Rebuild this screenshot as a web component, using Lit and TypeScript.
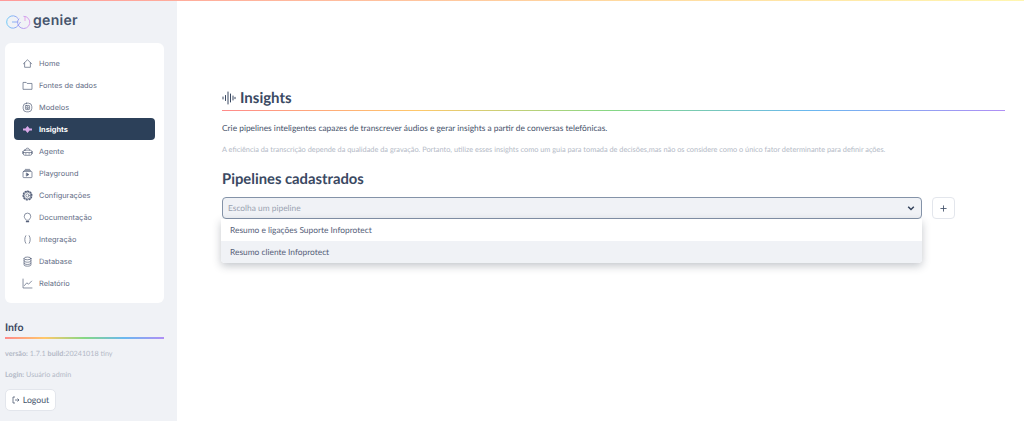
import { LitElement, html, css, svg } from "lit";
import { customElement } from "lit/decorators.js";

const I = (c: unknown) => html`<svg class="ic" viewBox="0 0 16 16" fill="none" stroke="currentColor" stroke-width="1" stroke-linecap="round" stroke-linejoin="round">${c}</svg>`;
const menu: [string, unknown][] = [
  ["Home", svg`<path d="M2 8.500 8 2.500l6 6M3.800 7v6.500h8.400V7"/>`],
  ["Fontes de dados", svg`<path d="M1.500 13V3.500h4.500l1.500 1.500h7V13z"/>`],
  ["Modelos", svg`<rect x="1.700" y="1.700" width="12.600" height="12.600" rx="5"/><rect x="5" y="5" width="6" height="6" rx="1"/><path d="M7 9V7h2v2z"/>`],
  ["Insights", svg`<path fill="#d8a8e8" stroke="none" d="M8 3 11 6.500h3.500v3H11L8 13 5 9.500H1.500v-3H5z"/>`],
  ["Agente", svg`<rect x="2" y="6" width="12" height="7.500" rx="2"/><path d="M5 6c0-4 6-4 6 0M2 9.500h12M5 11.500h1M10 11.500h1" /><path d="M1 8v3M15 8v3"/>`],
  ["Playground", svg`<rect x="1.500" y="5" width="13" height="9" rx="1"/><path d="M3.500 3.500h9M5 2h6"/><path fill="currentColor" d="M6.800 7.500 10 9.500l-3.200 2z"/>`],
  ["Configurações", svg`<circle cx="8" cy="8" r="2.400"/><circle cx="8" cy="8" r="5"/><path stroke-width="2" stroke-dasharray="1.600 2.300" d="M8 1.700a6.300 6.300 0 1 1-.01 0"/>`],
  ["Documentação", svg`<path d="M5.800 11.500C5 9.800 3.300 8.800 3.300 6.300a4.700 4.700 0 0 1 9.400 0c0 2.500-1.700 3.500-2.500 5.200z"/><path stroke-width="1.600" d="M6.300 14h3.400"/>`],
  ["Integração", svg`<path d="M5.500 2.500C3.500 5.500 3.500 10.500 5.500 13.500M10.500 2.500C12.500 5.500 12.500 10.500 10.500 13.500"/>`],
  ["Database", svg`<ellipse cx="8" cy="3.500" rx="5" ry="2"/><path d="M3 3.500v9.500c0 1 2 1.800 5 1.800s5-.8 5-1.800V3.500M3 7c0 1 2 2 5 2s5-1 5-2M3 10.300c0 1 2 2 5 2s5-1 5-2"/>`],
  ["Relatório", svg`<path d="M1.500 1.500v13h13"/><path d="M3.500 11 7 7l2.500 2 4.500-4.500"/>`],
];

@customElement("app-root")
export class AppRoot extends LitElement {
  static styles = css`
    :host { display: block; height: 421px; overflow: hidden; background: #fff; position: relative; font-family: Lato, sans-serif; color: #31405a; text-rendering: geometricPrecision; }
    .top { position: absolute; left: 0; right: 0; top: 0; height: 1px; background: linear-gradient(90deg, #ff9a9a, #ffd9a0 60%, #fff6b0); z-index: 2; }
    .layout { display: flex; height: 100%; }
    aside { width: 177px; flex: none; background: #f0f2f6; padding: 12px 13px 0 5px; box-sizing: border-box; }
    .logo { display: flex; align-items: center; height: 18px; }
    .logo svg { width: 27px; height: 16px; margin-right: 1px; margin-top: 2px; }
    .logo span { font: 600 14px/18px Inter, sans-serif; color: #46546c; letter-spacing: .3px; }
    .card { background: #fff; border-radius: 6px; margin-top: 13px; height: 260px; padding: 9px 9px; box-sizing: border-box; }
    .item { display: flex; align-items: center; height: 22px; padding-left: 8px; border-radius: 4px; font: 400 7.400px Inter, sans-serif; color: #626c85; gap: 6px; }
    .item .ic { width: 11px; height: 11px; color: #535e78; flex: none; }
    .item.on { background: #2c4059; color: #fff; font-weight: 700; }
    .info { margin-top: 18px; }
    .info h4 { margin: 0; font: 700 10.500px/14px Lato, sans-serif; color: #3b4760; height: 14px; }
    .rule { height: 1px; background: linear-gradient(90deg, #ff8a8a, #ffc86a 25%, #85d885 50%, #6ab8f0 75%, #b08ff5); }
    .info .rule { margin-top: 2px; height: 1.500px; }
    .meta { font: 400 7.200px/10px Lato, sans-serif; color: #b3b9c6; margin: 0; }
    .meta b { font-weight: 700; }
    .v { margin-top: 10px; }
    .l { margin-top: 11px; }
    .logout { display: inline-flex; align-items: center; gap: 3px; margin-top: 9px; height: 22px; width: 51px; justify-content: center; box-sizing: border-box; border: 1px solid #e3e6ec; border-radius: 5px; background: #fff; font: 400 8.700px Lato, sans-serif; color: #46546c; }
    .logout svg { width: 8px; height: 8px; }
    main { flex: 1; padding: 86px 19px 0 45px; min-width: 0; }
    .title { display: flex; align-items: center; gap: 4px; height: 22px; padding-top: 1px; font: 700 15px/22px Lato, sans-serif; color: #3a4962; }
    .title svg { width: 14px; height: 14px; }
    main .rule { margin-top: 1px; }
    .p { margin: 10px 0 0; font: 400 8.400px/14px Lato, sans-serif; color: #46526b; white-space: nowrap; }
    .cap { margin: 9px 0 0; font: 400 7.350px/12px Lato, sans-serif; color: #b3b9c6; white-space: nowrap; }
    h2 { margin: 13px 0 0; font: 700 14.800px/20px Lato, sans-serif; color: #3a4962; }
    .row { display: flex; gap: 10px; margin-top: 8px; }
    .selwrap { position: relative; width: 700px; flex: none; }
    .sel { height: 22px; box-sizing: border-box; background: #f0f2f6; border: 1px solid #8493a8; border-radius: 4px; display: flex; align-items: center; justify-content: space-between; padding: 0 6px 1px 5px; font: 400 8.400px Lato, sans-serif; color: #9aa2b1; }
    .sel svg { width: 8px; height: 8px; }
    .drop { position: absolute; top: 22px; left: -1px; right: 0; height: 44px; background: #fff; border-radius: 0 0 4px 4px; box-shadow: 0 3px 8px rgba(40,50,70,.28); font: 400 8.400px Lato, sans-serif; color: #566179; overflow: hidden; }
    .opt { height: 22px; box-sizing: border-box; display: flex; align-items: center; padding: 0 0 1px 9px; }
    .opt.hi { background: #f0f2f6; }
    .plus { width: 23px; height: 22px; box-sizing: border-box; border: 1px solid #e3e6ec; border-radius: 4px; background: #fff; display: flex; align-items: center; justify-content: center; color: #46546c; }
    .plus svg { width: 7px; height: 7px; }
  `;

  render() {
    return html`
      <div class="top"></div>
      <div class="layout">
        <aside>
          <div class="logo">
            <svg viewBox="0 0 27 16" fill="none" stroke-width="1">
              <defs>
                <linearGradient id="lg" gradientUnits="userSpaceOnUse" x1="0" x2="27" y1="0" y2="0"><stop offset="0" stop-color="#6fd0f7"/><stop offset=".5" stop-color="#9a9ff2"/><stop offset="1" stop-color="#ec9eea"/></linearGradient>
              </defs>
              <path stroke="url(#lg)" d="M13 4.500A6.200 6.200 0 1 0 13 11.500C14 10 15 9 15.500 8M7 8h6"/>
              <path stroke="url(#lg)" d="M18.500 2.300A6.100 6.100 0 1 1 14 4.500"/>
              <path stroke="#e7a6ea" d="M20 2v5"/>
            </svg>
            <span>genier</span>
          </div>
          <div class="card">
            ${menu.map(([t, p]) => html`<div class="item ${t === "Insights" ? "on" : ""}">${I(p)}<span>${t}</span></div>`)}
          </div>
          <div class="info">
            <h4>Info</h4>
            <div class="rule"></div>
            <p class="meta v"><b>versão:</b> 1.7.1 <b>build:</b>20241018 tiny</p>
            <p class="meta l"><b>Login:</b> Usuário admin</p>
            <div class="logout">
              <svg viewBox="0 0 16 16" fill="none" stroke="currentColor" stroke-width="1.500"><path d="M6 2H2v12h4M6 8h8M11 5l3 3-3 3"/></svg>
              Logout
            </div>
          </div>
        </aside>
        <main>
          <div class="title">
            <svg viewBox="0 0 14 14" fill="none" stroke="currentColor" stroke-width="1" stroke-linecap="round"><path d="M1 6v2M3.500 4.500v5M6 1v12M8.500 3v8M11 5v4M13 6.300v1.400"/></svg>
            <span>Insights</span>
          </div>
          <div class="rule"></div>
          <p class="p">Crie pipelines inteligentes capazes de transcrever áudios e gerar insights a partir de conversas telefônicas.</p>
          <p class="cap">A eficiência da transcrição depende da qualidade da gravação. Portanto, utilize esses insights como um guia para tomada de decisões,mas não os considere como o único fator determinante para definir ações.</p>
          <h2>Pipelines cadastrados</h2>
          <div class="row">
            <div class="selwrap">
              <div class="sel">
                <span>Escolha um pipeline</span>
                <svg viewBox="0 0 10 10" fill="none" stroke="#31405a" stroke-width="1.800"><path d="M1.500 3.500 5 7l3.500-3.500"/></svg>
              </div>
              <div class="drop">
                <div class="opt">Resumo e ligações Suporte Infoprotect</div>
                <div class="opt hi">Resumo cliente Infoprotect</div>
              </div>
            </div>
            <div class="plus"><svg viewBox="0 0 8 8" stroke="currentColor" stroke-width="1"><path d="M4 .5v7M.5 4h7"/></svg></div>
          </div>
        </main>
      </div>
    `;
  }
}
